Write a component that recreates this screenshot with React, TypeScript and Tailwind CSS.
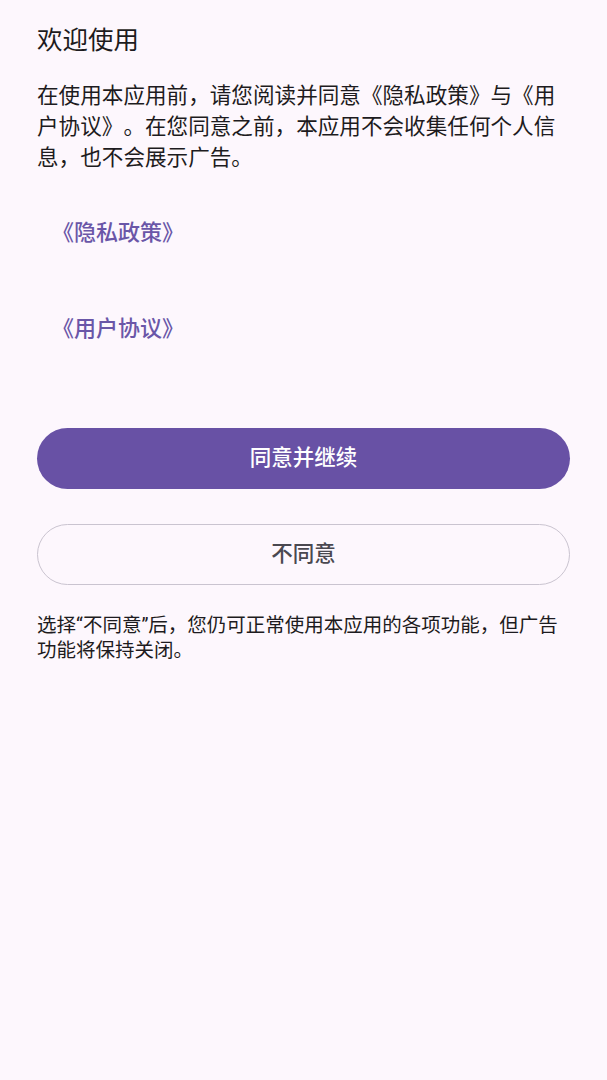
const FONT = { fontFamily: 'Roboto, "Noto Sans CJK SC", sans-serif' };

export default function App() {
  return (
    <div
      className="min-h-[1080px] w-full bg-[#fdf7fd] px-[37px] text-[#1d1b20] [text-spacing-trim:space-all]"
      style={FONT}
    >
      <h1 className="pt-[24px] text-[25.5px] font-normal leading-[32px]">欢迎使用</h1>

      <p className="mt-[24px] text-[21.6px] leading-[31px]">
        在使用本应用前，请您阅读并同意《隐私政策》与《用户协议》。在您同意之前，本应用不会收集任何个人信息，也不会展示广告。
      </p>

      <div className="mt-[35px] flex flex-col items-start gap-[48px]">
        <button className="flex h-[48px] items-center pl-[15px] text-[22px] font-medium text-[#6a56a8]">
          《隐私政策》
        </button>
        <button className="flex h-[48px] items-center pl-[15px] text-[22px] font-medium text-[#6a56a8]">
          《用户协议》
        </button>
      </div>

      <div className="mt-[76px] flex flex-col gap-[35px]">
        <button className="flex h-[61px] w-full items-center justify-center rounded-full bg-[#6851a5] text-[21.5px] font-medium text-white">
          同意并继续
        </button>
        <button className="flex h-[61px] w-full items-center justify-center rounded-full border-[1.5px] border-[#cac4d0] text-[21.5px] font-medium text-[#4a4850]">
          不同意
        </button>
      </div>

      <p className="mt-[28px] text-[19.5px] leading-[25px]">
        选择“不同意”后，您仍可正常使用本应用的各项功能，但广告功能将保持关闭。
      </p>
    </div>
  );
}
